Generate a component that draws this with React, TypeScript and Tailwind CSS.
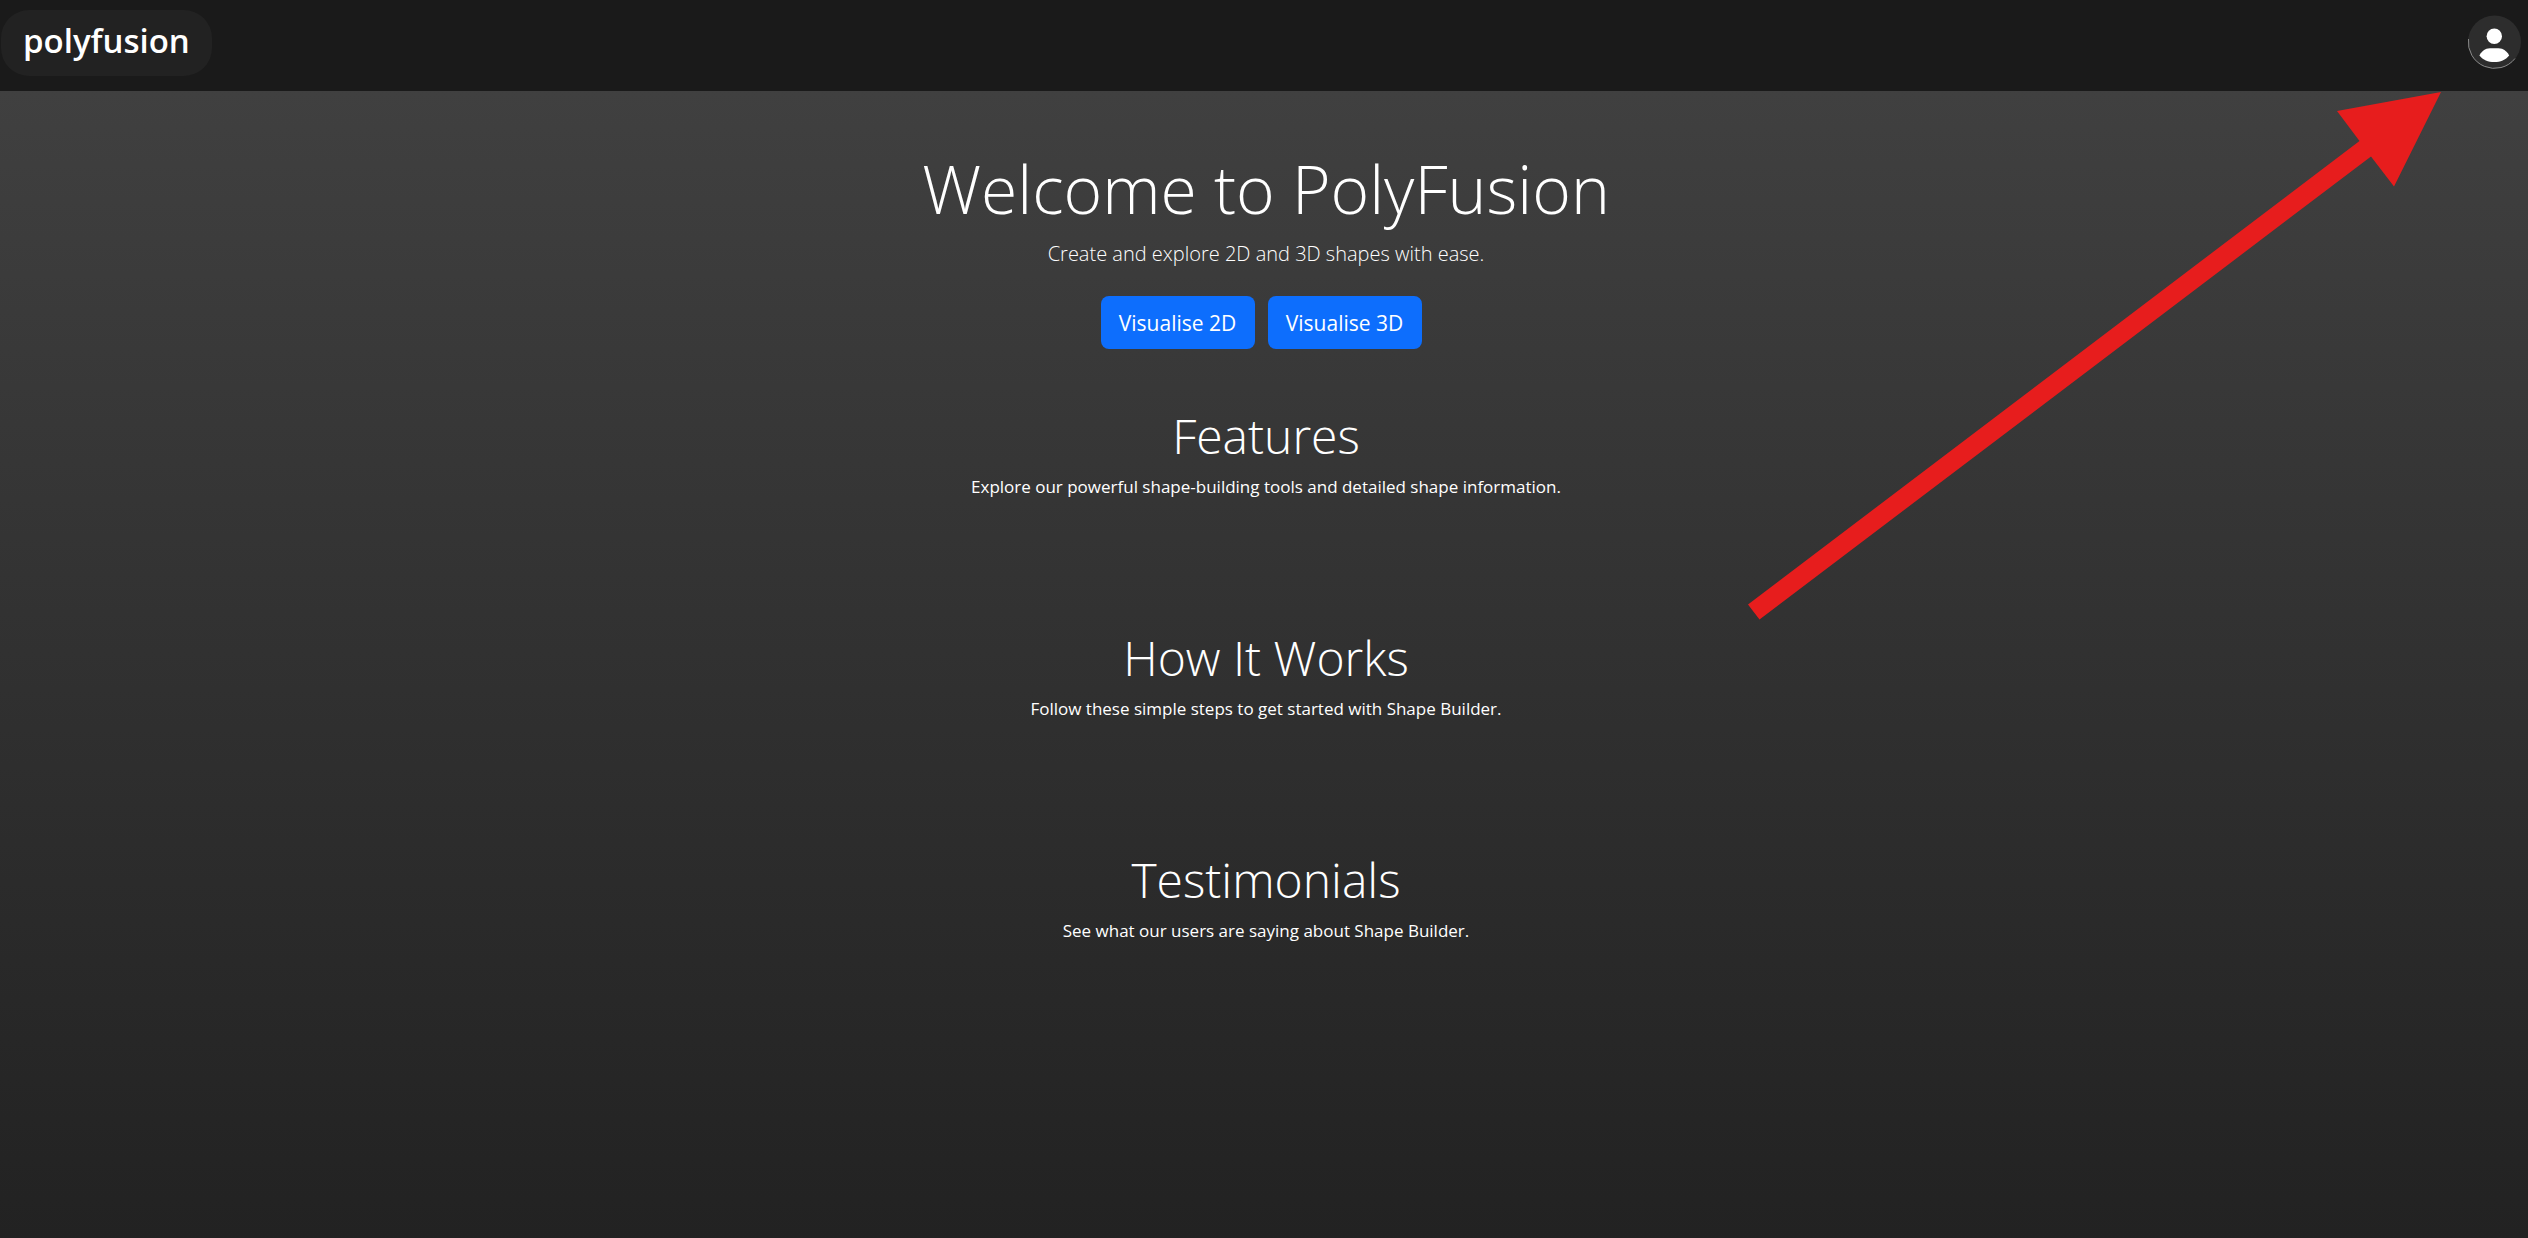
const sections = [
  { title: "Features", text: "Explore our powerful shape-building tools and detailed shape information." },
  { title: "How It Works", text: "Follow these simple steps to get started with Shape Builder." },
  { title: "Testimonials", text: "See what our users are saying about Shape Builder." },
];

function ProfileIcon() {
  return (
    <svg viewBox="0 0 54 54" className="size-[54px]" aria-hidden="true">
      <circle cx="26.5" cy="27" r="26.5" fill="#2d2d2d" />
      <path d="M0.5 24A26.2 26.2 0 0 0 47 43.5" fill="none" stroke="#8a8a8a" strokeWidth="1" />
      <circle cx="26.3" cy="21.3" r="7.7" fill="#fff" />
      <path d="M18.5 33.8C22.5 33.2 30 33.2 34 33.8C37.5 35.4 40 37.8 41.2 40.4C37.5 44.9 32.5 47.1 26.3 47.1C20 47.1 15 44.9 11.4 40.4C12.6 37.8 15 35.4 18.5 33.8Z" fill="#fff" />
    </svg>
  );
}

function Arrow() {
  return (
    <svg
      viewBox="0 0 693 528"
      className="pointer-events-none absolute top-[92px] right-[87px] w-[693px]"
      aria-hidden="true"
    >
      <path d="M693 0L589 19L611.5 49L0 512.5L11.5 527.5L623 64.5L646 94.5Z" fill="#e71d1d" />
    </svg>
  );
}

export default function App() {
  return (
    <div className="relative flex min-h-screen flex-col bg-[#1a1a1a] font-['Segoe_UI','Open_Sans',sans-serif] text-white">
      <header className="flex items-start justify-between pt-[10px] pr-[6px] pb-[15px] pl-px">
        <a href="#" className="flex h-[66px] items-center rounded-[28px] bg-[#222222] px-[22px] pb-1.5 text-[33px] leading-none font-semibold">
          polyfusion
        </a>
        <button type="button" aria-label="Profile" className="mt-[5px] rounded-full">
          <ProfileIcon />
        </button>
      </header>
      <main className="flex grow flex-col items-center bg-linear-to-b from-[#404040] to-[#222222] pt-[55px] pl-1 text-center">
        <h1 className="text-[66px] leading-[84px] font-light">Welcome to PolyFusion</h1>
        <p className="mt-1.5 text-[20px] leading-[36px] font-light">Create and explore 2D and 3D shapes with ease.</p>
        <div className="mt-6 mr-2.5 flex gap-[13px]">
          <button type="button" className="h-[53px] w-[154px] rounded-lg bg-[#0d6efd] pt-0.5 text-[21px]">Visualise 2D</button>
          <button type="button" className="h-[53px] w-[154px] rounded-lg bg-[#0d6efd] pt-0.5 text-[21px]">Visualise 3D</button>
        </div>
        <div className="mt-[54px]">
          {sections.map((s) => (
            <section key={s.title} className="h-[222px]">
              <h2 className="text-[48px] leading-[66px] font-light">{s.title}</h2>
              <p className="mt-1 text-[17px] leading-7">{s.text}</p>
            </section>
          ))}
        </div>
      </main>
      <Arrow />
    </div>
  );
}
